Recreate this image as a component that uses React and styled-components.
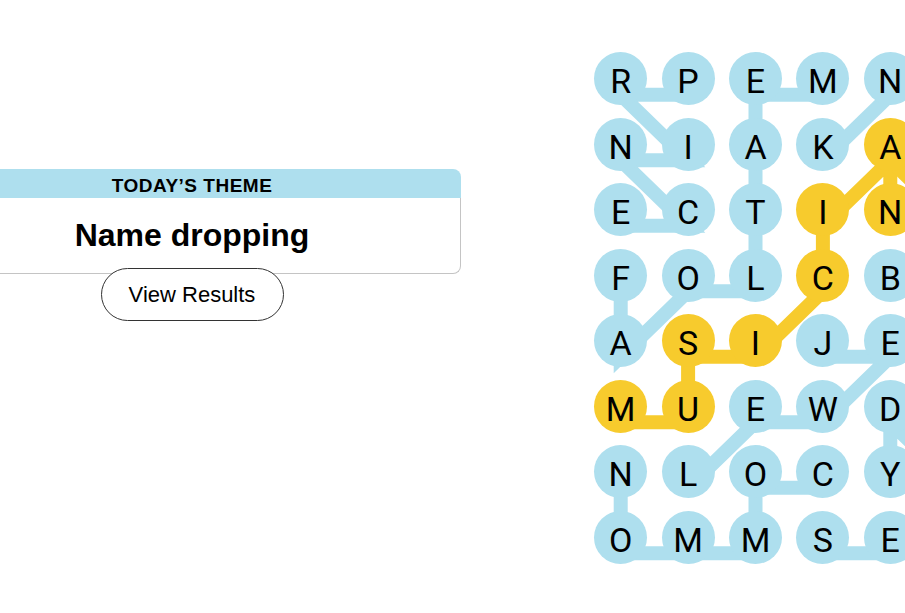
import React from "react";
import styled, { createGlobalStyle } from "styled-components";

const BLUE = "#aedfee";
const YELLOW = "#f7cb2d";
const COL_W = 67.4;
const ROW_H = 65.5;

const GlobalStyle = createGlobalStyle`
    html, body {
        margin: 0;
        padding: 0;
        background: #ffffff;
        overflow: hidden;
    }
    body {
        font-family: "Liberation Sans", Arial, sans-serif;
        color: #000000;
    }
`;

const Page = styled.div`
    display: flex;
    width: 905px;
    height: 613px;
    overflow: hidden;
`;

const LeftPanel = styled.div`
    width: 384px;
    flex-shrink: 0;
    display: flex;
    flex-direction: column;
    align-items: center;
    padding-top: 169px;
`;

const ThemeCard = styled.div`
    width: 538px;
    flex-shrink: 0;
    display: flex;
    flex-direction: column;
`;

const CardHeader = styled.div`
    height: 29px;
    line-height: 34px;
    background: ${BLUE};
    border-radius: 8px 8px 0 0;
    text-align: center;
    font-size: 19px;
    font-weight: 700;
    letter-spacing: 0.5px;
    text-transform: uppercase;
`;

const CardBody = styled.div`
    height: 75px;
    display: flex;
    align-items: center;
    justify-content: center;
    border: 1px solid #c4c4c4;
    border-top: none;
    border-radius: 0 0 8px 8px;
    background: #ffffff;
    font-size: 32px;
    font-weight: 700;
`;

const ResultsButton = styled.button`
    margin-top: -6px;
    width: 183px;
    height: 53px;
    border: 1px solid #333333;
    border-radius: 27px;
    background: #ffffff;
    font-family: "Liberation Sans", Arial, sans-serif;
    font-size: 22px;
    color: #000000;
    cursor: pointer;
`;

const BoardArea = styled.div`
    margin-left: 203px;
    padding-top: 46px;
    flex-shrink: 0;
`;

const Board = styled.div`
    position: relative;
    display: grid;
    grid-template-columns: repeat(6, ${COL_W}px);
    grid-template-rows: repeat(8, ${ROW_H}px);
`;

const Links = styled.svg`
    position: absolute;
    left: 0;
    top: 0;
    overflow: visible;
    pointer-events: none;
`;

const Cell = styled.div`
    position: relative;
    display: flex;
    align-items: center;
    justify-content: center;
`;

const Bubble = styled.div`
    width: 53px;
    height: 53px;
    border-radius: 50%;
    background: ${(p) => (p.$gold ? YELLOW : BLUE)};
    display: flex;
    align-items: center;
    justify-content: center;
    font-family: Roboto, "Liberation Sans", sans-serif;
    font-size: 34px;
    line-height: 1;
    padding-top: 5px;
    box-sizing: border-box;
`;

const letters = [
    "RPEMN",
    "NIAKA",
    "ECTIN",
    "FOLCB",
    "ASIJE",
    "MUEWD",
    "NLOCY",
    "OMMSE",
];

const spangram = [[5, 0], [5, 1], [4, 1], [4, 2], [3, 3], [2, 3], [1, 4], [2, 4]];

const words = [
    { gold: false, path: [[0, 1], [0, 0], [1, 1], [1, 0], [2, 1], [2, 0]] },
    { gold: false, path: [[0, 3], [0, 2], [1, 2], [2, 2], [3, 2], [3, 1], [4, 0], [3, 0]] },
    { gold: false, path: [[1, 3], [0, 4]] },
    { gold: false, path: [[4, 3], [4, 4], [5, 3], [5, 2], [6, 1]] },
    { gold: false, path: [[6, 3], [6, 2], [7, 2], [7, 1], [7, 0], [6, 0]] },
    { gold: false, path: [[7, 3], [7, 4], [7, 5], [6, 5], [5, 4], [6, 4]] },
    { gold: true, path: spangram },
    { gold: true, path: [[1, 4], [2, 5]] },
];

const isGold = (r, c) => spangram.some(([a, b]) => a === r && b === c);

const toPoints = (path) =>
    path.map(([r, c]) => `${(c + 0.5) * COL_W},${(r + 0.5) * ROW_H}`).join(" ");

export default function App() {
    return (
        <>
            <GlobalStyle />
            <Page>
                <LeftPanel>
                    <ThemeCard>
                        <CardHeader>Today’s Theme</CardHeader>
                        <CardBody>Name dropping</CardBody>
                    </ThemeCard>
                    <ResultsButton>View Results</ResultsButton>
                </LeftPanel>
                <BoardArea>
                    <Board>
                        <Links width={COL_W * 6} height={ROW_H * 8}>
                            <g transform="translate(0 16)">
                                {words.map((w, i) => (
                                    <polyline
                                        key={i}
                                        points={toPoints(w.path)}
                                        fill="none"
                                        stroke={w.gold ? YELLOW : BLUE}
                                        strokeWidth="14"
                                        strokeLinejoin="miter"
                                        strokeLinecap="butt"
                                    />
                                ))}
                            </g>
                        </Links>
                        {letters.map((row, r) =>
                            [...row, ""].map((ch, c) => (
                                <Cell key={`${r}-${c}`}>
                                    {ch && <Bubble $gold={isGold(r, c)}>{ch}</Bubble>}
                                </Cell>
                            ))
                        )}
                    </Board>
                </BoardArea>
            </Page>
        </>
    );
}
